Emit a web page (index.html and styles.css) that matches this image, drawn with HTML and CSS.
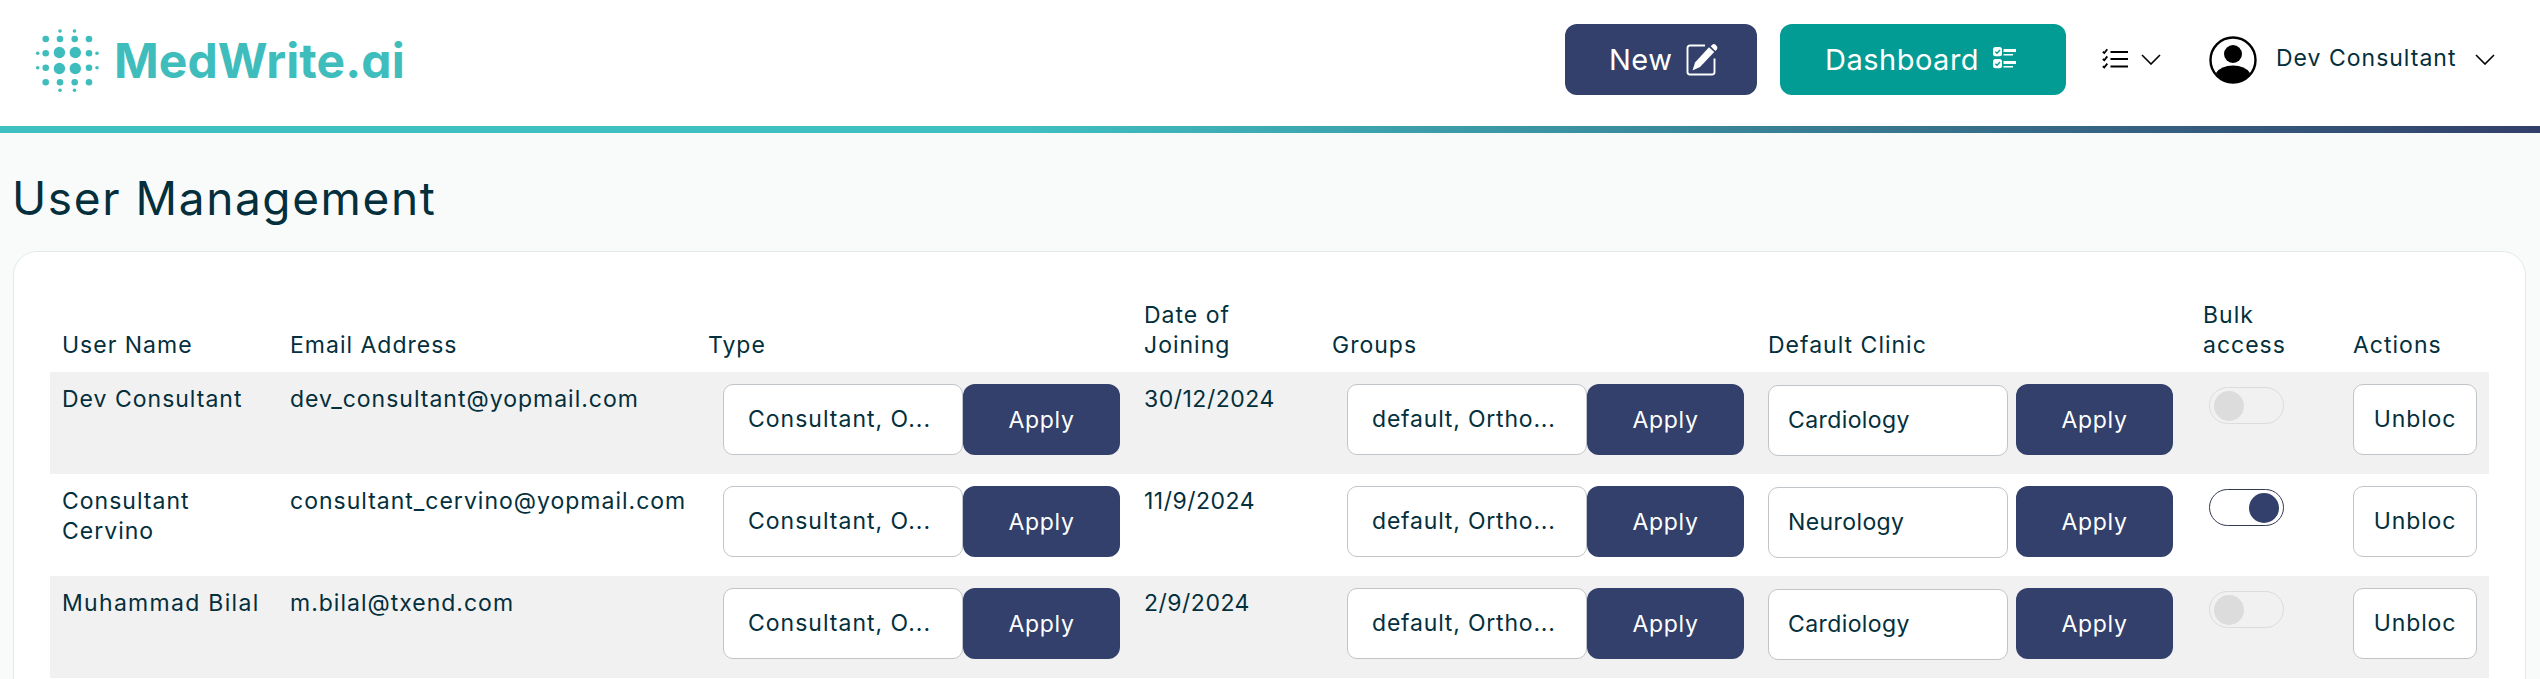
FILE: index.html
```
<!DOCTYPE html>
<html>
  <head>
    <meta charset="utf-8"/>
    <title>User Management</title>
    <link rel="stylesheet" href="styles.css">
  </head>
  <body>
  <header class="header">
    <div class="logo">
      <svg class="mark" width="66" height="66" viewBox="34 27 66 66">
        <g class="dots">
          <circle cx="60" cy="31" r="1.8"/><circle cx="74.5" cy="31" r="1.8"/>
          <circle cx="60" cy="90.3" r="1.8"/><circle cx="74.5" cy="90.3" r="1.8"/>
          <circle cx="37.7" cy="53.3" r="1.8"/><circle cx="97" cy="53.3" r="1.8"/>
          <circle cx="37.7" cy="67.8" r="1.8"/><circle cx="97" cy="67.8" r="1.8"/>
          <circle cx="45.7" cy="39" r="3.3"/><circle cx="60" cy="39" r="3.3"/>
          <circle cx="74.7" cy="39" r="3.3"/><circle cx="89" cy="39" r="3.3"/>
          <circle cx="45.7" cy="53.3" r="3.3"/><circle cx="89" cy="53.3" r="3.3"/>
          <circle cx="45.7" cy="67.8" r="3.3"/><circle cx="89" cy="67.8" r="3.3"/>
          <circle cx="45.7" cy="82.2" r="3.3"/><circle cx="60" cy="82.2" r="3.3"/>
          <circle cx="74.7" cy="82.2" r="3.3"/><circle cx="89" cy="82.2" r="3.3"/>
          <circle cx="59.4" cy="52.5" r="5.7"/><circle cx="75.3" cy="52.5" r="5.7"/>
          <circle cx="59.4" cy="68.5" r="5.7"/><circle cx="75.3" cy="68.5" r="5.7"/>
        </g>
      </svg>
      <span class="brand">MedWrite.ai</span>
    </div>
    <nav class="nav">
      <button class="btn btn-new">New
        <svg width="32" height="34" viewBox="0 0 32 34">
          <path d="M19 2.5H4Q1.5 2.5 1.5 5V29Q1.5 31.500 4 31.500H26Q28.500 31.500 28.500 29V15.500" fill="none" stroke="#fff" stroke-width="1.900"/>
          <path d="M6.500 27.500L9 19.500 23 4.200 28.200 9 14 24Z" fill="#fff"/>
          <path d="M24.700 3.200L26.500 1.500Q28 .400 29.500 1.800L30.900 3.300Q32 4.900 30.900 6.200L29.300 7.900Z" fill="#fff"/>
        </svg>
      </button>
      <button class="btn btn-dash">Dashboard
        <svg width="24" height="22" viewBox="0 0 24 22">
          <rect x="0" y="0" width="9" height="9.300" rx="2.500" fill="#fff"/>
          <rect x="0" y="12" width="9" height="9.300" rx="2.500" fill="#fff"/>
          <path d="M2.300 4.700L4 6.300 7 3M2.300 16.700L4 18.300 7 15" fill="none" stroke="#029c94" stroke-width="1.300"/>
          <path d="M10.500 2H23V5H10.500ZM10.500 7H20V8.500H10.500ZM10.500 14H23V17H10.500ZM10.500 19H20V20.500H10.500Z" fill="#fff"/>
        </svg>
      </button>
      <svg class="list" width="27" height="22" viewBox="0 0 27 22">
        <path d="M8.500 4H26M8.500 11H26M8.500 18.500H26" fill="none" stroke="#000" stroke-width="1.800"/>
        <path d="M.800 3.800L2.300 5 5.300 1.200M.800 11L2.300 12.200 5.300 8.400M.800 18.200L2.300 19.400 5.300 15.600" fill="none" stroke="#000" stroke-width="1.800"/>
      </svg>
      <svg class="chev" width="20" height="11" viewBox="0 0 20 11"><path d="M1 1L10 10 19 1"/></svg>
      <svg class="avatar" width="48" height="48" viewBox="0 0 48 48">
        <circle cx="24" cy="24" r="22.500" fill="#fff" stroke="#000" stroke-width="2.400"/>
        <circle cx="24" cy="18" r="9"/>
        <path d="M7 37Q12 29.500 24 29.500T41 37Q35 47 24 47T7 37Z"/>
      </svg>
      <span class="name">Dev Consultant</span>
      <svg class="chev" width="20" height="11" viewBox="0 0 20 11"><path d="M1 1L10 10 19 1"/></svg>
    </nav>
  </header>
  <h1 class="title">User Management</h1>
  <div class="card">
    <table class="users">
      <colgroup>
        <col class="c-name"><col class="c-mail"><col class="c-type"><col class="c-date">
        <col class="c-groups"><col class="c-clinic"><col class="c-bulk"><col class="c-act">
      </colgroup>
      <thead>
        <tr>
          <th>User Name</th>
          <th>Email Address</th>
          <th>Type</th>
          <th>Date of<br>Joining</th>
          <th>Groups</th>
          <th>Default Clinic</th>
          <th>Bulk<br>access</th>
          <th>Actions</th>
        </tr>
      </thead>
      <tbody>
        <tr>
          <td>Dev Consultant</td>
          <td>dev_consultant@yopmail.com</td>
          <td><div class="pick"><div class="multi">Consultant, O...</div><button class="apply">Apply</button></div></td>
          <td class="date">30/12/2024</td>
          <td><div class="pick"><div class="multi groups">default, Ortho...</div><button class="apply">Apply</button></div></td>
          <td><div class="pick clinic"><div class="sel">Cardiology</div><button class="apply">Apply</button></div></td>
          <td><div class="switch off"></div></td>
          <td><button class="unblock">Unbloc</button></td>
        </tr>
        <tr>
          <td>Consultant Cervino</td>
          <td>consultant_cervino@yopmail.com</td>
          <td><div class="pick"><div class="multi">Consultant, O...</div><button class="apply">Apply</button></div></td>
          <td class="date">11/9/2024</td>
          <td><div class="pick"><div class="multi groups">default, Ortho...</div><button class="apply">Apply</button></div></td>
          <td><div class="pick clinic"><div class="sel">Neurology</div><button class="apply">Apply</button></div></td>
          <td><div class="switch on"></div></td>
          <td><button class="unblock">Unbloc</button></td>
        </tr>
        <tr>
          <td class="wide">Muhammad Bilal</td>
          <td>m.bilal@txend.com</td>
          <td><div class="pick"><div class="multi">Consultant, O...</div><button class="apply">Apply</button></div></td>
          <td class="date">2/9/2024</td>
          <td><div class="pick"><div class="multi groups">default, Ortho...</div><button class="apply">Apply</button></div></td>
          <td><div class="pick clinic"><div class="sel">Cardiology</div><button class="apply">Apply</button></div></td>
          <td><div class="switch off"></div></td>
          <td><button class="unblock">Unbloc</button></td>
        </tr>
      </tbody>
    </table>
  </div>
  </body>
</html>
```
FILE: styles.css
```
*{
  box-sizing: border-box;
}
body{
  margin: 0;
  height: 679px;
  overflow: hidden;
  background-color: #f9fbfb;
  color: #042f3c;
  font-family: Inter, "Liberation Sans", sans-serif;
  font-size: 23px;
  line-height: 30px;
  letter-spacing: 1px;
}
button{
  font: inherit;
  color: #fff;
  letter-spacing: inherit;
  border: 0;
  padding: 0;
}
.header{
  display: flex;
  justify-content: space-between;
  height: 133px;
  padding: 0 45px 14px 34px;
  background: linear-gradient(90deg, #3fc0c0 40%, #323f6b) bottom / 100% 7px no-repeat #fff;
}
.logo{
  display: flex;
  align-items: center;
}
.brand{
  margin: 2px 0 0 14px;
  color: #3fbdbd;
  font-size: 48px;
  font-weight: 700;
  letter-spacing: 0.1px;
  font-feature-settings: "cv11";
}
.dots{
  fill: #3fbdbd;
}
.nav{
  display: flex;
  align-items: center;
}
.btn{
  display: flex;
  align-items: center;
  height: 71px;
  border-radius: 12px;
  font-size: 29px;
  letter-spacing: 0.5px;
}
.btn-new{
  width: 192px;
  padding-left: 44px;
  gap: 14px;
  margin-right: 23px;
  background-color: #32406b;
}
.btn-dash{
  width: 286px;
  padding-left: 45px;
  gap: 14px;
  background-color: #029c94;
}
.btn-dash svg{
  margin-bottom: 4px;
}
.list{
  margin: 0 12px 2px 36px;
}
.chev{
  fill: none;
  stroke: #000;
  stroke-width: 1.6;
}
.avatar{
  margin: 0 19px 0 48px;
}
.name{
  width: 179px;
  margin-right: 20px;
  margin-bottom: 4px;
  white-space: nowrap;
}
.title{
  margin: 39px 0 0 12px;
  font-size: 46px;
  font-weight: 400;
  line-height: 52px;
  letter-spacing: 1.6px;
}
.card{
  width: 2513px;
  height: 460px;
  margin: 27px 0 0 13px;
  padding: 36px 0 0 36px;
  border: 1px solid #e3e9e9;
  border-radius: 24px;
  background-color: #fff;
}
.users{
  width: 2439px;
  table-layout: fixed;
  border-collapse: collapse;
}
.c-name{ width: 228px; }
.c-mail{ width: 418px; }
.c-type{ width: 436px; }
.c-date{ width: 188px; }
.c-groups{ width: 436px; }
.c-clinic{ width: 435px; }
.c-bulk{ width: 150px; }
.c-act{ width: 148px; }
th{
  padding: 12px;
  font-weight: 400;
  text-align: left;
  vertical-align: bottom;
}
td{
  height: 102px;
  padding: 12px;
  vertical-align: top;
}
tbody tr:nth-child(odd){
  background-color: #f1f1f1;
}
.date{
  letter-spacing: 0.5px;
}
.wide{
  letter-spacing: 1.3px;
  white-space: nowrap;
}
.pick{
  display: flex;
  margin-left: 15px;
}
.multi, .sel, .unblock{
  height: 71px;
  border: 1px solid #bfc5c9;
  border-radius: 10px;
  background-color: #fff;
  line-height: 69px;
}
.multi, .sel{
  width: 240px;
  padding-left: 24px;
  white-space: nowrap;
}
.groups{
  letter-spacing: 0.8px;
}
.clinic{
  gap: 8px;
  margin-left: 0;
}
.sel{
  margin-top: 1px;
  padding-left: 19px;
  letter-spacing: 0.4px;
}
.apply{
  width: 157px;
  height: 71px;
  border-radius: 12px;
  background-color: #32406b;
  letter-spacing: 0.7px;
}
.switch{
  display: flex;
  align-items: center;
  width: 75px;
  height: 37px;
  margin: 3px 0 0 6px;
  padding: 0 4px;
  border: 1px solid #dcdcdc;
  border-radius: 19px;
}
.switch:after{
  content: "";
  width: 30px;
  height: 30px;
  border-radius: 50%;
  background-color: #dcdcdc;
}
.on{
  justify-content: flex-end;
  border-color: #323b52;
}
.on:after{
  background-color: #32406b;
}
.unblock{
  width: 124px;
  color: #042f3c;
  letter-spacing: 0.9px;
}
```
